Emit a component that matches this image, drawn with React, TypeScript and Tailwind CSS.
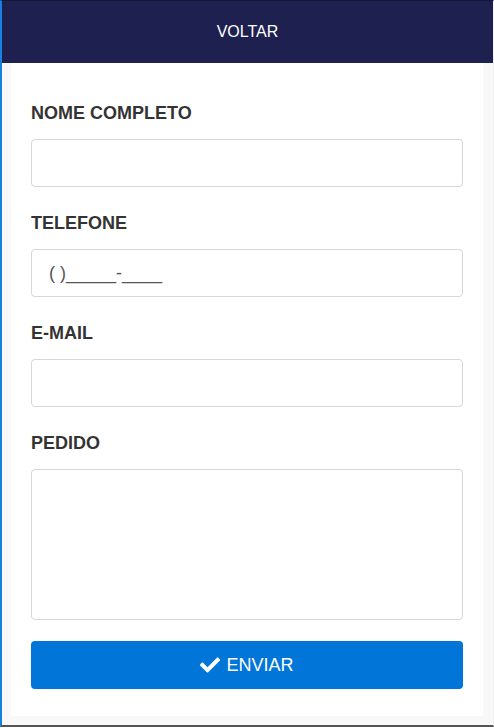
import { FaCheck } from 'react-icons/fa'

type FieldProps = {
    label: string
    last?: boolean
    children: React.ReactNode
}

function Field({ label, last, children }: FieldProps) {
    return (
        <div className={last ? 'mb-[21px]' : 'mb-[24px]'}>
            <label className="block text-[18px] leading-6 font-bold text-[#333] mb-[14px]">{label}</label>
            {children}
        </div>
    )
}

const inputCls =
    'block w-full h-[48px] rounded-[4px] border border-[#d6d6d6] bg-white px-[17px] text-[18px] text-[#555] outline-none'

export default function App() {
    return (
        <div
            className="w-[494px] h-[727px] bg-[#f8f8f8] border-l-2 border-l-[#1a80e0] border-r border-r-[#f2f2f2] border-t border-t-[#141838] border-b-2 border-b-[#555] flex flex-col"
            style={{ fontFamily: '"Liberation Sans", Arial, sans-serif' }}
        >
            <div className="h-[62px] bg-[#1e2150] flex items-center justify-center text-white text-[16px]">
                VOLTAR
            </div>
            <div className="flex-1 pl-[9px] pr-[10px] pb-[9px]">
                <div className="bg-white h-full px-[20px] pt-[38px]">
                    <Field label="NOME COMPLETO">
                        <input className={inputCls} />
                    </Field>
                    <Field label="TELEFONE">
                        <input className={inputCls} defaultValue="( )_____-____" />
                    </Field>
                    <Field label="E-MAIL">
                        <input className={inputCls} />
                    </Field>
                    <Field label="PEDIDO" last>
                        <textarea className={inputCls + ' h-[151px] resize-none'} />
                    </Field>
                    <button className="w-full h-[48px] rounded-[4px] bg-[#0275d8] text-white text-[18px] flex items-center justify-center gap-[6px]">
                        <FaCheck className="w-[20px] h-[20px]" />
                        ENVIAR
                    </button>
                </div>
            </div>
        </div>
    )
}
